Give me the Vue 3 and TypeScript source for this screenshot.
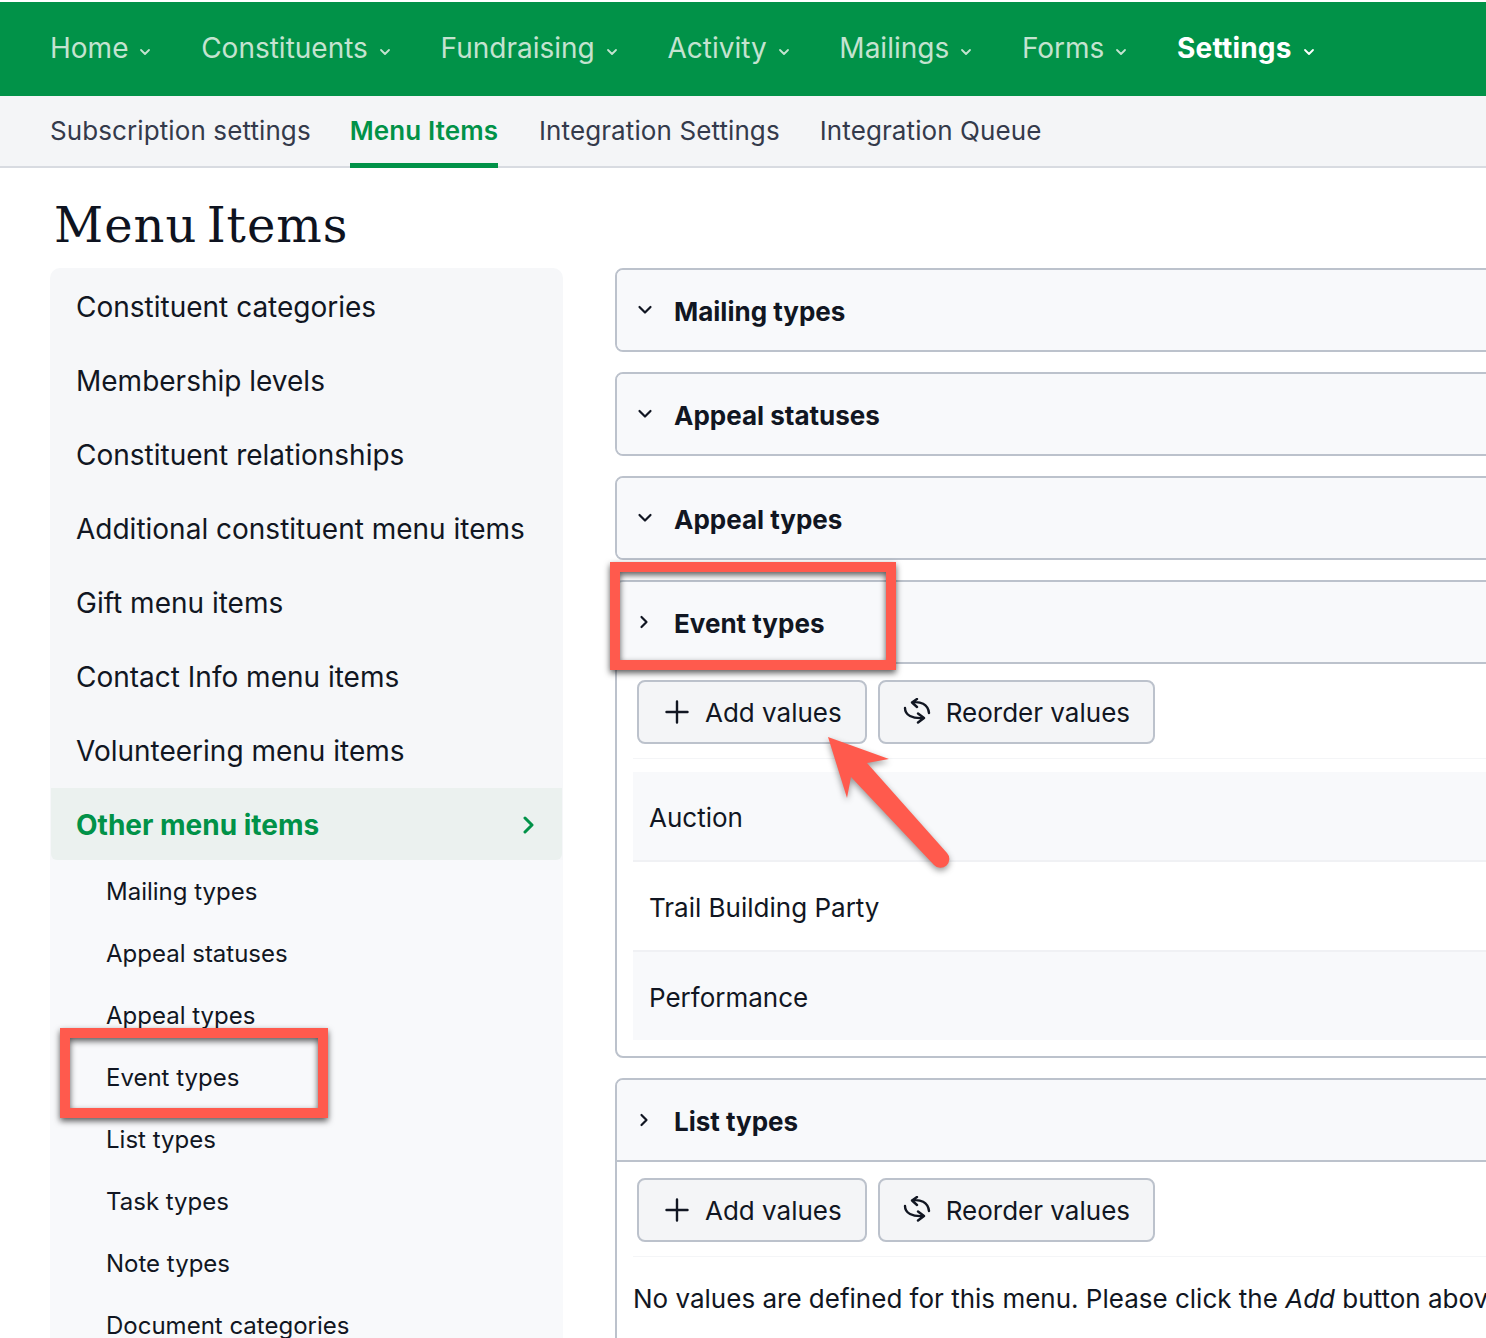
<script setup lang="ts">
const nav: string[] = ['Home', 'Constituents', 'Fundraising', 'Activity', 'Mailings', 'Forms', 'Settings']
const tabs: string[] = ['Subscription settings', 'Menu Items', 'Integration Settings', 'Integration Queue']
const side: string[] = ['Constituent categories', 'Membership levels', 'Constituent relationships', 'Additional constituent menu items', 'Gift menu items', 'Contact Info menu items', 'Volunteering menu items']
const sub: string[] = ['Mailing types', 'Appeal statuses', 'Appeal types', 'Event types', 'List types', 'Task types', 'Note types', 'Document categories']
const collapsed: string[] = ['Mailing types', 'Appeal statuses', 'Appeal types']
const rows: string[] = ['Auction', 'Trail Building Party', 'Performance']
</script>

<template>
  <div class="page">
    <nav class="nav">
      <a v-for="n in nav" :key="n" class="nav-item" :class="{ on: n === 'Settings' }">
        {{ n }}
        <svg class="caret" viewBox="0 0 12 8" width="12" height="8"><path d="M2 2l4 4 4-4" /></svg>
      </a>
    </nav>
    <div class="tabs">
      <a v-for="t in tabs" :key="t" class="tab" :class="{ on: t === 'Menu Items' }">{{ t }}</a>
    </div>
    <h1 class="title">Menu Items</h1>
    <div class="cols">
      <aside class="side">
        <a v-for="s in side" :key="s" class="side-item">{{ s }}</a>
        <a class="side-item active">
          Other menu items
          <svg viewBox="0 0 14 18" width="14" height="18"><path d="M3 2l7 7-7 7" /></svg>
        </a>
        <div class="subs">
          <a v-for="s in sub" :key="s" class="sub-item">{{ s }}</a>
        </div>
      </aside>
      <main class="main">
        <section v-for="c in collapsed" :key="c" class="panel">
          <header class="head closed">
            <svg class="chev" viewBox="0 0 16 16" width="16" height="16"><path d="M2.500 5l5.500 5.500L13.500 5" /></svg>
            <span class="head-text">{{ c }}</span>
          </header>
        </section>
        <section class="panel">
          <header class="head">
            <svg class="chev r" viewBox="0 0 16 16" width="16" height="16"><path d="M4.500 3l5 5-5 5" /></svg>
            <span class="head-text">Event types</span>
          </header>
          <div class="body">
            <div class="btns">
              <button class="btn">
                <svg class="ic" viewBox="0 0 24 24" width="24" height="24"><path d="M12 1.500v21M1.500 12h21" /></svg>
                Add values
              </button>
              <button class="btn re">
                <svg class="ic" viewBox="0 0 28 28" width="28" height="28"><path d="M14 1L9 4.500 14 9M9 4.500C17 3 25 6 26 15M15 15.500L21 20 15 24.500M21 20C9 21 2 17 2 10" /></svg>
                Reorder values
              </button>
            </div>
            <div class="rows">
              <div v-for="r in rows" :key="r" class="row">{{ r }}</div>
            </div>
          </div>
        </section>
        <section class="panel">
          <header class="head">
            <svg class="chev r" viewBox="0 0 16 16" width="16" height="16"><path d="M4.500 3l5 5-5 5" /></svg>
            <span class="head-text">List types</span>
          </header>
          <div class="body">
            <div class="btns">
              <button class="btn">
                <svg class="ic" viewBox="0 0 24 24" width="24" height="24"><path d="M12 1.500v21M1.500 12h21" /></svg>
                Add values
              </button>
              <button class="btn re">
                <svg class="ic" viewBox="0 0 28 28" width="28" height="28"><path d="M14 1L9 4.500 14 9M9 4.500C17 3 25 6 26 15M15 15.500L21 20 15 24.500M21 20C9 21 2 17 2 10" /></svg>
                Reorder values
              </button>
            </div>
            <p class="empty">No values are defined for this menu. Please click the <em>Add</em> button above to create a new value.</p>
          </div>
        </section>
      </main>
    </div>
    <div class="mark m1"></div>
    <div class="mark m2"></div>
    <svg class="arrow" viewBox="0 0 1486 1338" width="1486" height="1338">
      <path d="M828 737L889 759L867 763L947 853A8.500 8.500 0 0 1 934 865L851 777L847 798Z" />
    </svg>
  </div>
</template>

<style>
html, body { margin: 0; background: #fff; overflow: hidden; }
</style>

<style scoped>
.page {
  position: relative;
  width: 1486px;
  height: 1338px;
  overflow: hidden;
  padding-top: 2px;
  box-sizing: border-box;
  font-family: Inter, "Liberation Sans", sans-serif;
  color: #111622;
  background: #fff;
}
.nav {
  height: 94px;
  box-sizing: border-box;
  padding: 0 0 2px 50px;
  background: #019248;
  display: flex;
  align-items: center;
  gap: 49.700px;
}
.nav-item {
  display: flex;
  align-items: center;
  gap: 11px;
  font-size: 28px;
  color: #c4e3d0;
}
.nav-item.on { color: #fff; font-weight: 700; letter-spacing: 0.2px; }
.caret { fill: none; stroke: currentColor; stroke-width: 1.800; stroke-linecap: round; stroke-linejoin: round; margin-top: 7px; }
.tabs {
  height: 70px;
  background: #f4f5f7;
  border-bottom: 2px solid #d8dbe1;
  display: flex;
  padding-left: 50px;
  gap: 40px;
}
.tab {
  position: relative;
  font-size: 26px;
  letter-spacing: 0.1px;
  line-height: 70px;
  color: #343a4b;
}
.tab.on { color: #019248; font-weight: 600; margin-left: -1px; margin-right: 1px; }
.tab.on::after {
  content: "";
  position: absolute;
  left: 0;
  right: 0;
  bottom: -2px;
  height: 5px;
  background: #019248;
}
.title {
  margin: 0;
  height: 100px;
  padding-left: 54px;
  font-family: "DejaVu Serif", serif;
  font-weight: 400;
  font-size: 48px;
  letter-spacing: 1px;
  word-spacing: -7px;
  line-height: 114px;
  color: #0e1320;
}
.cols {
  display: flex;
  gap: 52px;
  padding-left: 50px;
}
.side {
  flex: 0 0 513px;
  width: 513px;
  background: #f6f7f9;
  border-radius: 10px 10px 0 0;
  box-sizing: border-box;
  padding-top: 1px;
}
.side-item {
  display: flex;
  align-items: center;
  justify-content: space-between;
  box-sizing: border-box;
  height: 74px;
  padding: 1px 26px 0;
  font-size: 28px;
}
.side-item.active {
  height: 72px;
  margin: 1px 1px 0;
  padding: 1px 26px 0 25px;
  background: #ebf1ef;
  color: #019248;
  font-weight: 700;
  border-radius: 0 0 6px 6px;
}
.side-item svg { fill: none; stroke: #019248; stroke-width: 3; stroke-linecap: round; stroke-linejoin: round; }
.subs { background: #f8f9fb; height: 600px; }
.sub-item {
  display: block;
  height: 62px;
  line-height: 64px;
  padding-left: 56px;
  font-size: 24px;
}
.main {
  flex: 0 0 960px;
  display: flex;
  flex-direction: column;
  gap: 20px;
}
.panel {
  border: 2px solid #bcc2cc;
  border-radius: 8px;
  background: #fff;
}
.head {
  height: 80px;
  background: #f8f9fb;
  border-bottom: 2px solid #bcc2cc;
  border-radius: 6px 6px 0 0;
  display: flex;
  align-items: center;
  padding-left: 20px;
  gap: 21px;
  font-size: 26px;
  font-weight: 700;
}
.head.closed { border-bottom: 0; border-radius: 6px; }
.head-text { margin-top: 2px; }
.chev { fill: none; stroke: #111622; stroke-width: 2.200; stroke-linecap: round; stroke-linejoin: round; flex: none; }
.body { padding: 16px 16px 16px; }
.btns {
  display: flex;
  gap: 11px;
  padding: 0 4px 14px;
  border-bottom: 1px solid #f4f5f7;
}
.btn {
  display: flex;
  align-items: center;
  gap: 16px;
  height: 64px;
  box-sizing: border-box;
  padding: 0 23px 0 26px;
  border: 2px solid #bcc2cc;
  border-radius: 8px;
  background: #f4f5f7;
  font: 400 26px Inter, "Liberation Sans", sans-serif;
  color: #111622;
}
.btn.re { padding: 0 23px; gap: 15px; }
.ic { fill: none; stroke: #111622; stroke-width: 2.400; stroke-linecap: round; stroke-linejoin: round; flex: none; }
.rows { margin-top: 13px; }
.row {
  height: 88px;
  line-height: 91px;
  padding-left: 16px;
  font-size: 26px;
  border-bottom: 2px solid #f0f1f4;
}
.row:nth-child(odd) { background: #f8f9fb; }
.row:last-child { border-bottom: 0; }
.empty {
  margin: 26px 0 40px;
  font-size: 26px;
  white-space: nowrap;
}
.mark {
  position: absolute;
  box-sizing: border-box;
  border: 10px solid #ff5a4d;
  filter: drop-shadow(0 3px 3px rgba(0, 0, 0, 0.65));
}
.m1 { left: 610px; top: 562px; width: 286px; height: 108px; }
.m2 { left: 60px; top: 1028px; width: 268px; height: 90px; }
.arrow {
  position: absolute;
  left: 0;
  top: 0;
  fill: #ff5a4d;
  filter: drop-shadow(0 3px 3px rgba(0, 0, 0, 0.4));
}
</style>
